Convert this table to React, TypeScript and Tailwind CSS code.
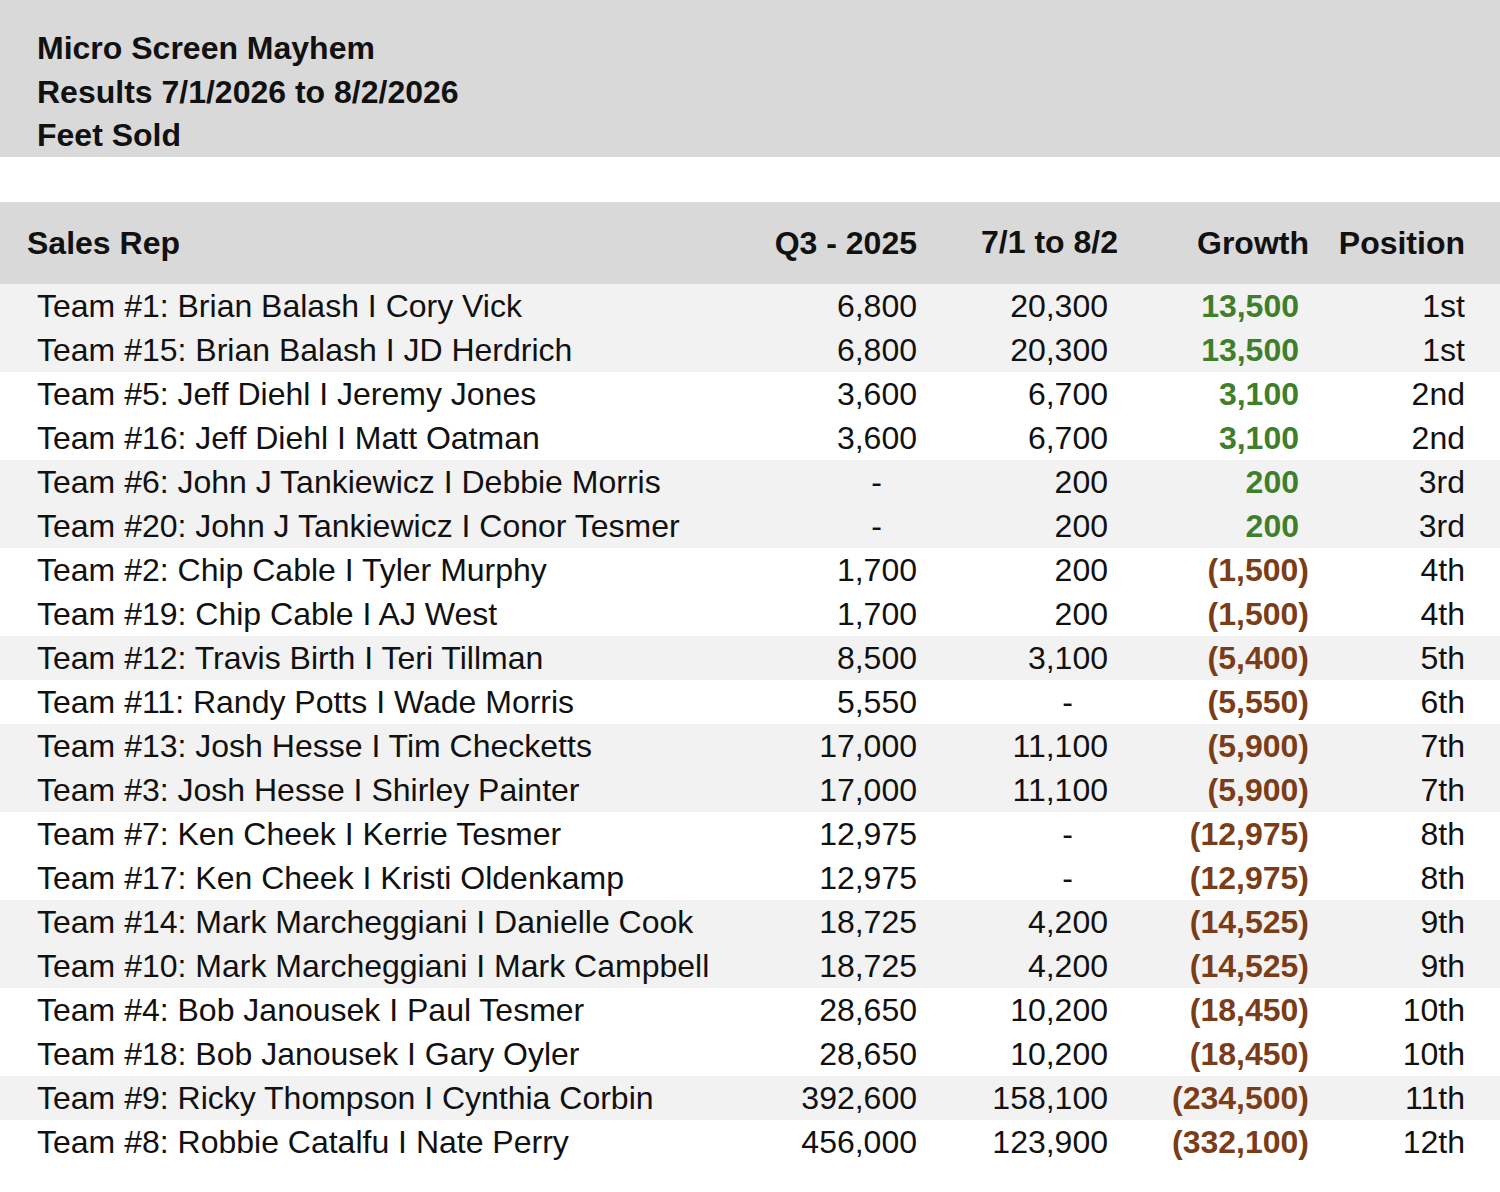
import React from 'react';

type Row = {
  team: string;
  q3: string;
  current: string;
  growth: string;
  position: string;
  rank: number;
};

const rows: Row[] = [
  { team: 'Team #1: Brian Balash I Cory Vick', q3: '6,800', current: '20,300', growth: '13,500', position: '1st', rank: 1 },
  { team: 'Team #15: Brian Balash I JD Herdrich', q3: '6,800', current: '20,300', growth: '13,500', position: '1st', rank: 1 },
  { team: 'Team #5: Jeff Diehl I Jeremy Jones', q3: '3,600', current: '6,700', growth: '3,100', position: '2nd', rank: 2 },
  { team: 'Team #16: Jeff Diehl I Matt Oatman', q3: '3,600', current: '6,700', growth: '3,100', position: '2nd', rank: 2 },
  { team: 'Team #6: John J Tankiewicz I Debbie Morris', q3: '-', current: '200', growth: '200', position: '3rd', rank: 3 },
  { team: 'Team #20: John J Tankiewicz I Conor Tesmer', q3: '-', current: '200', growth: '200', position: '3rd', rank: 3 },
  { team: 'Team #2: Chip Cable I Tyler Murphy', q3: '1,700', current: '200', growth: '(1,500)', position: '4th', rank: 4 },
  { team: 'Team #19: Chip Cable I AJ West', q3: '1,700', current: '200', growth: '(1,500)', position: '4th', rank: 4 },
  { team: 'Team #12: Travis Birth I Teri Tillman', q3: '8,500', current: '3,100', growth: '(5,400)', position: '5th', rank: 5 },
  { team: 'Team #11: Randy Potts I Wade Morris', q3: '5,550', current: '-', growth: '(5,550)', position: '6th', rank: 6 },
  { team: 'Team #13: Josh Hesse I Tim Checketts', q3: '17,000', current: '11,100', growth: '(5,900)', position: '7th', rank: 7 },
  { team: 'Team #3: Josh Hesse I Shirley Painter', q3: '17,000', current: '11,100', growth: '(5,900)', position: '7th', rank: 7 },
  { team: 'Team #7: Ken Cheek I Kerrie Tesmer', q3: '12,975', current: '-', growth: '(12,975)', position: '8th', rank: 8 },
  { team: 'Team #17: Ken Cheek I Kristi Oldenkamp', q3: '12,975', current: '-', growth: '(12,975)', position: '8th', rank: 8 },
  { team: 'Team #14: Mark Marcheggiani I Danielle Cook', q3: '18,725', current: '4,200', growth: '(14,525)', position: '9th', rank: 9 },
  { team: 'Team #10: Mark Marcheggiani I Mark Campbell', q3: '18,725', current: '4,200', growth: '(14,525)', position: '9th', rank: 9 },
  { team: 'Team #4: Bob Janousek I Paul Tesmer', q3: '28,650', current: '10,200', growth: '(18,450)', position: '10th', rank: 10 },
  { team: 'Team #18: Bob Janousek I Gary Oyler', q3: '28,650', current: '10,200', growth: '(18,450)', position: '10th', rank: 10 },
  { team: 'Team #9: Ricky Thompson I Cynthia Corbin', q3: '392,600', current: '158,100', growth: '(234,500)', position: '11th', rank: 11 },
  { team: 'Team #8: Robbie Catalfu I Nate Perry', q3: '456,000', current: '123,900', growth: '(332,100)', position: '12th', rank: 12 },
];

const grid = 'grid grid-cols-[760px_157px_201px_191px_156px]';

export default function App() {
  return (
    <div className="w-[1500px] min-h-[1192px] bg-white text-[#111] font-['Liberation_Sans',Arial,sans-serif]">
      {/* Report title */}
      <div className="h-[157px] bg-[#d9d9d9] pl-[37px] pt-[27px] text-[32px] leading-[43.5px] font-bold">
        <div>Micro Screen Mayhem</div>
        <div>Results 7/1/2026 to 8/2/2026</div>
        <div>Feet Sold</div>
      </div>

      <div className="h-[45px]" />

      {/* Column headers */}
      <div className={`${grid} h-[82px] items-center bg-[#d9d9d9] text-[32px] font-bold`}>
        <div className="pl-[27px]">Sales Rep</div>
        <div className="text-right">Q3 - 2025</div>
        <div className="text-right -mt-[3px]">7/1 to 8/2</div>
        <div className="text-right">Growth</div>
        <div className="text-right">Position</div>
      </div>

      {/* Results */}
      <div>
        {rows.map((r) => {
          const negative = r.growth.startsWith('(');
          return (
            <div
              key={r.team}
              className={`${grid} h-[44px] items-center text-[32px] leading-none ${r.rank % 2 === 1 ? 'bg-[#f2f2f2]' : 'bg-white'}`}
            >
              <div className="pl-[37px] whitespace-nowrap">{r.team}</div>
              <div className={`text-right ${r.q3 === '-' ? 'pr-[35px]' : ''}`}>{r.q3}</div>
              <div className={`text-right ${r.current === '-' ? 'pr-[45px]' : 'pr-[10px]'}`}>{r.current}</div>
              <div
                className={`text-right font-bold ${negative ? 'text-[#7b3d17]' : 'pr-[10px] text-[#3f7e2b]'}`}
              >
                {r.growth}
              </div>
              <div className="text-right">{r.position}</div>
            </div>
          );
        })}
      </div>
    </div>
  );
}
